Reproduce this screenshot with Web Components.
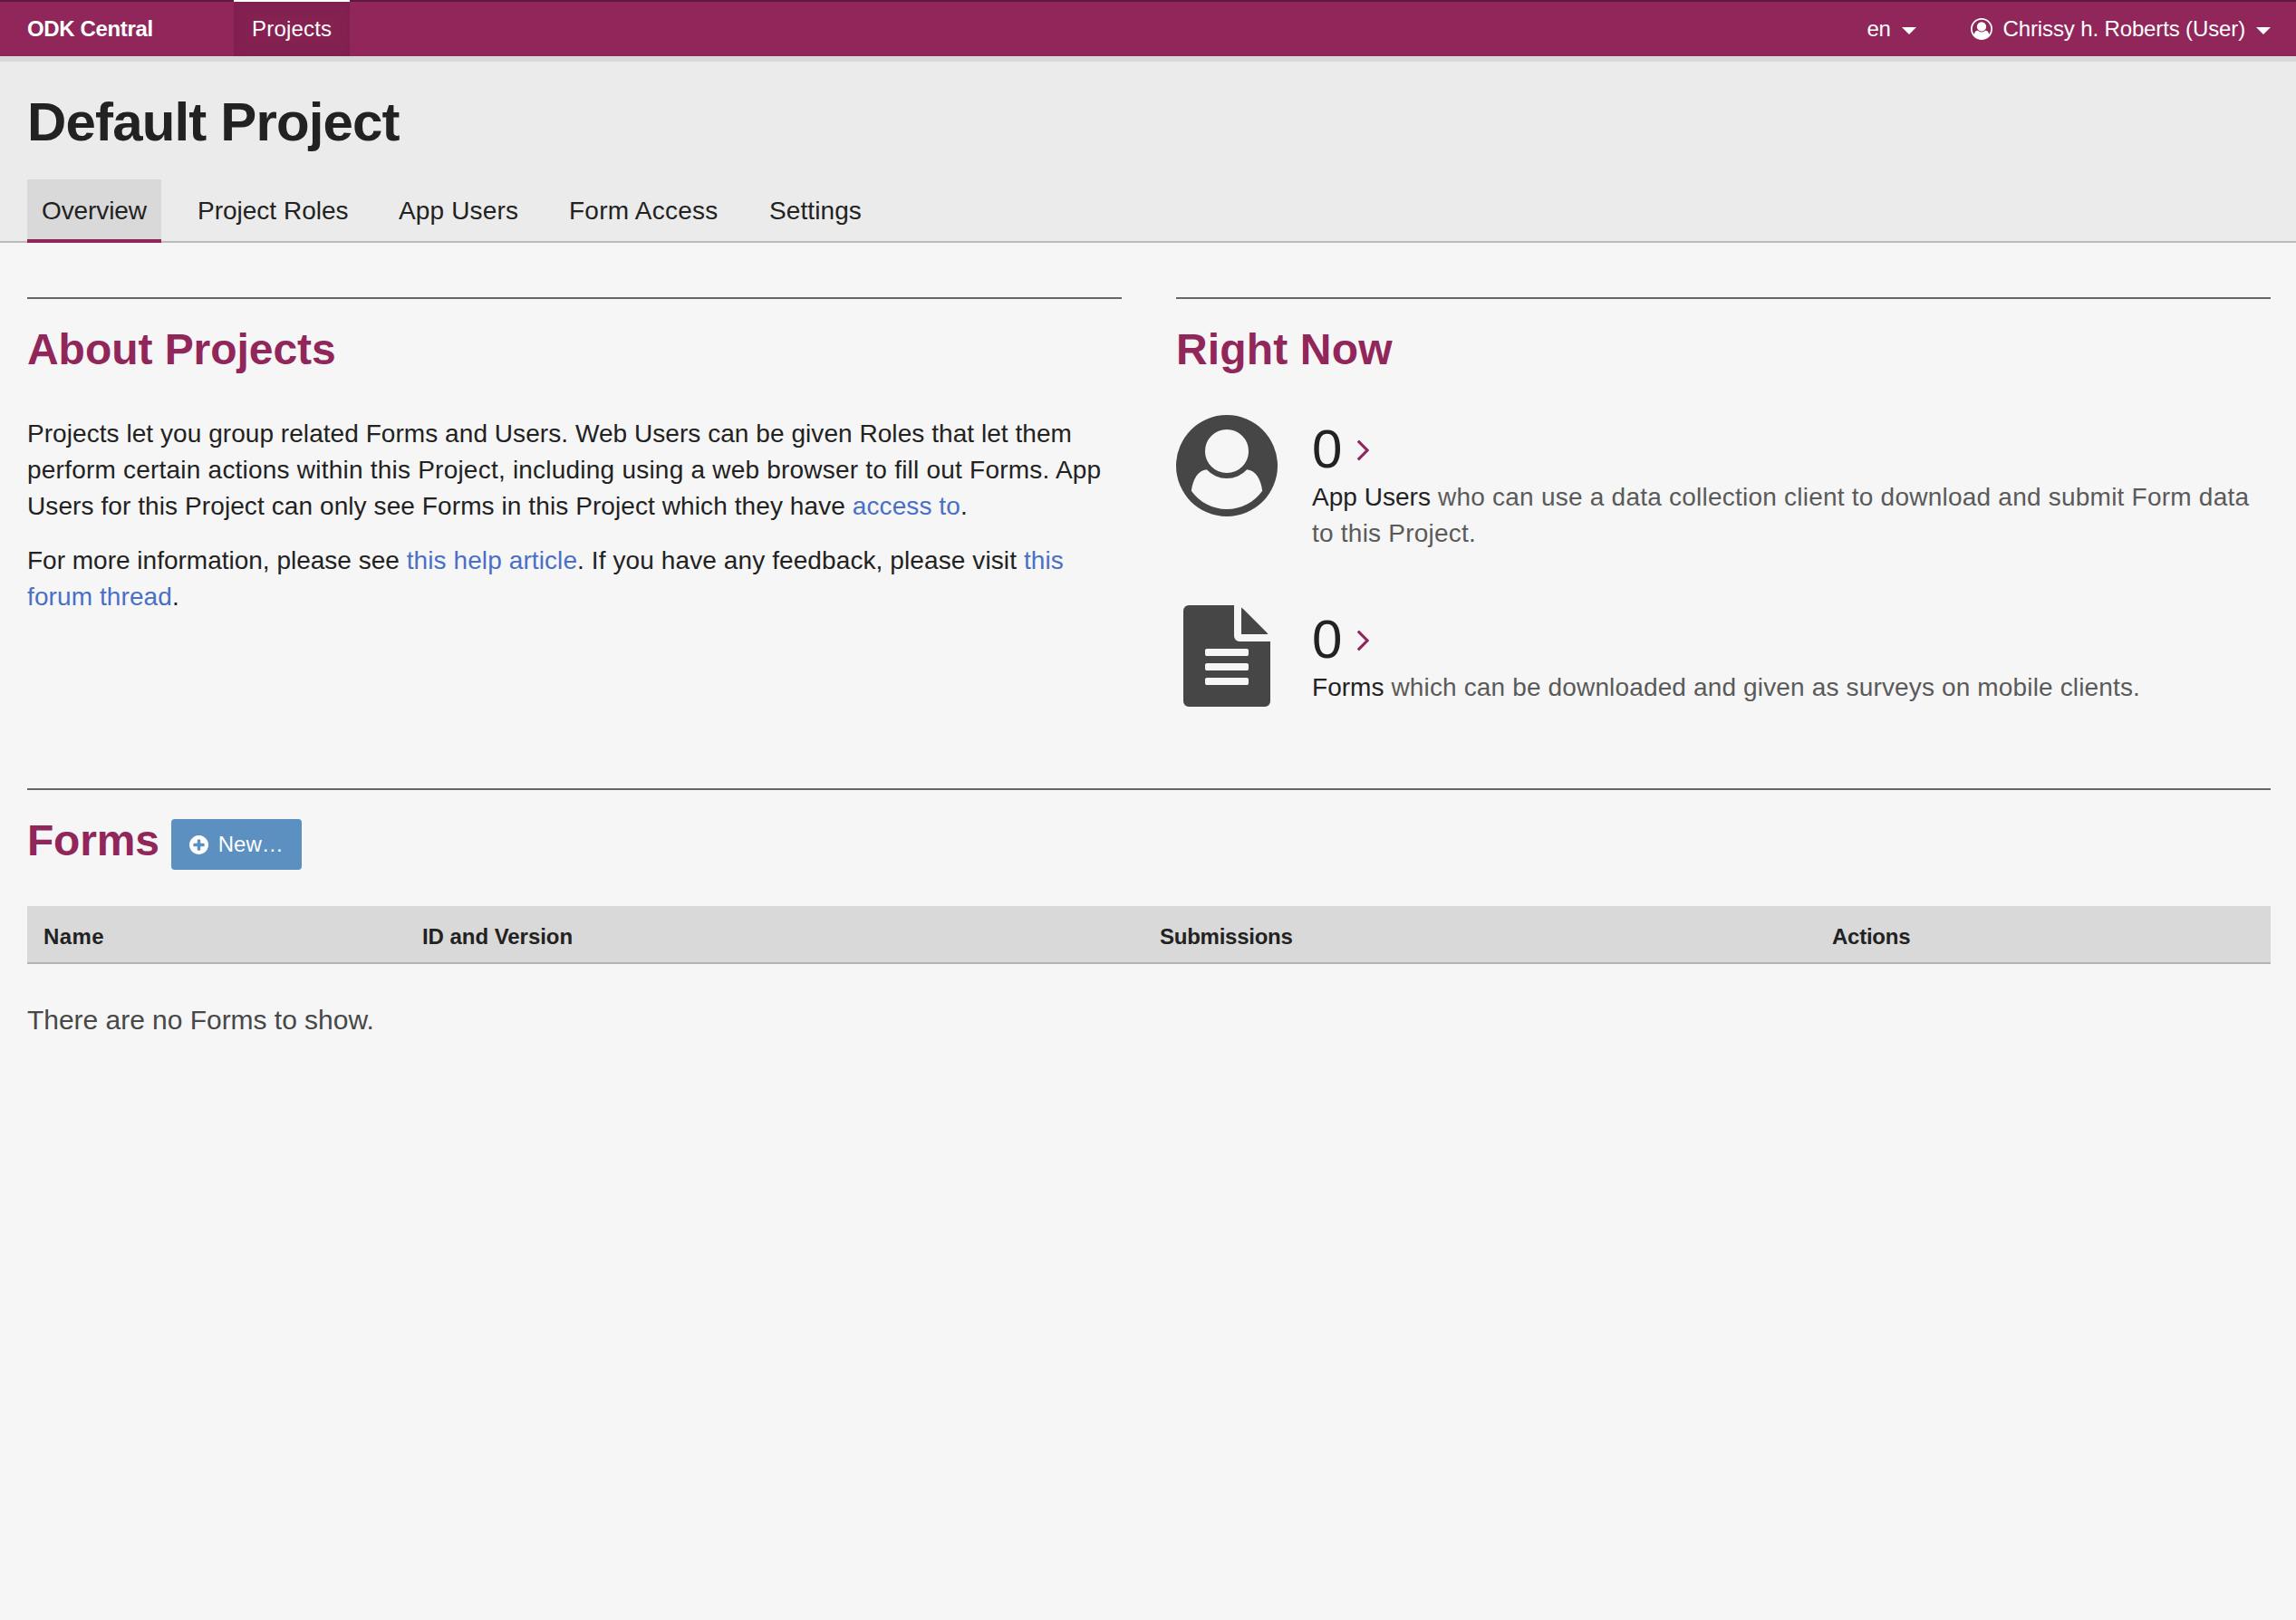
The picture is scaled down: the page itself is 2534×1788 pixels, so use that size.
<!DOCTYPE html>
<html lang="en">
<head>
<meta charset="utf-8">
<title>ODK Central</title>
<style>
  html, body { margin: 0; height: 100%; }
  body {
    background: #f6f6f6;
    color: #222;
    font-family: "Liberation Sans", Arial, sans-serif;
    font-size: 28px;
    line-height: 40px;
  }
</style>
</head>
<body>
<central-app></central-app>
<script>
const define = (name, html) => {
  const template = document.createElement('template');
  template.innerHTML = html;
  customElements.define(name, class extends HTMLElement {
    constructor() {
      super();
      this.attachShadow({ mode: 'open' }).append(template.content.cloneNode(true));
    }
  });
};

const ICONS = {
  'user-circle': ['0 0 1792 1792', 'M1523 1339q-22-155-87.5-257.5t-184.5-118.5q-67 74-159.5 115.5t-195.5 41.5-195.5-41.5-159.5-115.5q-119 16-184.5 118.5t-87.5 257.5q106 150 271 237.5t356 87.5 356-87.5 271-237.5zm-243-699q0-159-112.5-271.5t-271.5-112.5-271.5 112.5-112.5 271.5 112.5 271.5 271.5 112.5 271.5-112.5 112.5-271.5zm512 256q0 182-71 347.5t-190.5 286-285.5 191.5-349 71q-182 0-348-71t-286-191-191-286-71-348 71-348 191-286 286-191 348-71 348 71 286 191 191 286 71 348z'],
  'user-circle-o': ['0 0 1792 1792', 'M896 0q182 0 348 71t286 191 191 286 71 348q0 181-70.5 347t-190.5 286-286 191.5-349 71.5-349-71-285.5-191.5-190.5-286-71-347.5 71-348 191-286 286-191 348-71zm619 1351q149-205 149-455 0-156-61-298t-164-245-245-164-298-61-298 61-245 164-164 245-61 298q0 250 149 455 66-327 306-327 131 128 313 128t313-128q240 0 306 327zm-235-647q0-159-112.5-271.5t-271.5-112.5-271.5 112.5-112.5 271.5 112.5 271.5 271.5 112.5 271.5-112.5 112.5-271.5z'],
  'file-text': ['0 0 1792 1792', 'M1596 476q14 14 28 36h-472v-472q22 14 36 28zm-476 164h544v1056q0 40-28 68t-68 28h-1344q-40 0-68-28t-28-68v-1600q0-40 28-68t68-28h800v544q0 40 28 68t68 28zm160 736v-64q0-14-9-23t-23-9h-704q-14 0-23 9t-9 23v64q0 14 9 23t23 9h704q14 0 23-9t9-23zm0-256v-64q0-14-9-23t-23-9h-704q-14 0-23 9t-9 23v64q0 14 9 23t23 9h704q14 0 23-9t9-23zm0-256v-64q0-14-9-23t-23-9h-704q-14 0-23 9t-9 23v64q0 14 9 23t23 9h704q14 0 23-9t9-23z'],
  'plus-circle': ['128 128 1536 1536', 'M1344 960v-128q0-26-19-45t-45-19h-256v-256q0-26-19-45t-45-19h-128q-26 0-45 19t-19 45v256h-256q-26 0-45 19t-19 45v128q0 26 19 45t45 19h256v256q0 26 19 45t45 19h128q26 0 45-19t19-45v-256h256q26 0 45-19t19-45zm320-64q0 209-103 385.5t-279.5 279.5-385.5 103-385.5-103-279.5-279.5-103-385.5 103-385.5 279.5-279.5 385.5-103 385.5 103 279.5 279.5 103 385.5z'],
  'angle-right': ['589 470 582 980', 'M1171 960q0 13-10 23l-466 466q-10 10-23 10t-23-10l-50-50q-10-10-10-23t10-23l393-393-393-393q-10-10-10-23t10-23l50-50q10-10 23-10t23 10l466 466q10 10 10 23z']
};

customElements.define('c-icon', class extends HTMLElement {
  connectedCallback() {
    if (this.shadowRoot) return;
    const [box, path] = ICONS[this.getAttribute('name')];
    this.attachShadow({ mode: 'open' }).innerHTML =
      `<style>:host{display:block;flex:none} svg{display:block;width:100%;height:100%;overflow:visible}</style>
       <svg viewBox="${box}" fill="currentColor" aria-hidden="true"><path d="${path}"/></svg>`;
  }
});

define('c-caret', `<style>
  :host { display: block; flex: none; border: 8px solid transparent; border-top-color: #fff; border-bottom: 0; margin-top: 4px; }
</style>`);

define('nav-bar', `<style>
  :host {
    display: flex; align-items: stretch; box-sizing: border-box; height: 62px;
    padding: 0 28px 0 30px; background: #91265a; border-top: 2px solid #62173c;
    box-shadow: 0 6px 0 #d9d9d9; color: #fff; font-size: 24px; line-height: 60px; white-space: nowrap;
    position: relative;
  }
  .brand { width: 228px; font-weight: bold; letter-spacing: -.36px; }
  .link { box-sizing: border-box; width: 128px; margin-top: -2px; border-top: 2px solid #fff;
    padding-left: 20px; background: #852252; box-shadow: inset 0 0 16px rgba(110,20,65,.3); letter-spacing: .2px; }
  .right { margin-left: auto; display: flex; align-items: center; }
  .lang { margin-right: 12px; letter-spacing: -.3px; }
  .user { margin: 0 12px 0 12px; letter-spacing: -.13px; }
  c-icon { width: 24px; height: 24px; margin-left: 60px; }
</style>
<span class="brand">ODK Central</span>
<span class="link">Projects</span>
<div class="right">
  <span class="lang">en</span><c-caret></c-caret>
  <c-icon name="user-circle-o"></c-icon><span class="user">Chrissy h. Roberts (User)</span><c-caret></c-caret>
</div>`);

define('page-tab', `<style>
  :host { display: block; box-sizing: border-box; height: 70px; padding: 0 16px; line-height: 69px; white-space: nowrap; }
  :host([active]) { background: #d9d9d9; border-bottom: 4px solid #91265a; }
</style><slot></slot>`);

define('page-head', `<style>
  :host { display: block; box-sizing: border-box; height: 206px; padding: 34px 30px 0; background: #ebebeb; border-bottom: 2px solid #bbb; }
  h1 { margin: 0; height: 102px; font-size: 60px; line-height: 78px; letter-spacing: -.85px; white-space: nowrap; }
  nav { display: flex; gap: 24px; }
</style>
<h1><slot name="title"></slot></h1><nav><slot></slot></nav>`);

define('page-section', `<style>
  :host { display: block; flex: 1; border-top: 2px solid #666; }
  .head { display: flex; align-items: flex-start; height: 96px; padding-top: 32px; }
  h2 { margin: 0; color: #91265a; font-size: 48px; line-height: 47px; white-space: nowrap; }
</style>
<div class="head"><h2><slot name="title"></slot></h2><slot name="action"></slot></div><slot></slot>`);

define('new-button', `<style>
  :host { display: flex; align-items: center; box-sizing: border-box; width: 144px; height: 56px; padding-left: 20px;
    background: #5b90c1; color: #fff; border-radius: 4px; font-size: 24px; line-height: 56px; }
  c-icon { width: 21px; height: 21px; margin-right: 11px; }
</style><c-icon name="plus-circle"></c-icon><span><slot></slot></span>`);

define('about-text', `<style>
  :host { display: block; padding-top: 1px; white-space: nowrap; }
  p { margin: 0 0 20px; }
  a { color: #4a6fc7; }
  .a1 { letter-spacing: .055px; }
  .a2 { letter-spacing: .22px; }
  .a3 { letter-spacing: .09px; }
  .a4 { letter-spacing: .1px; }
  .a5 { letter-spacing: .1px; }
</style>
<p><span class="a1">Projects let you group related Forms and Users. Web Users can be given Roles that let them</span><br>
<span class="a2">perform certain actions within this Project, including using a web browser to fill out Forms. App</span><br>
<span class="a3">Users for this Project can only see Forms in this Project which they have <a>access to</a>.</span></p>
<p>For more information, please see <span class="a4"><a>this help article</a>. If you have any feedback, please visit <a>this</a></span><br>
<span class="a5"><a>forum thread</a>.</span></p>`);

customElements.define('summary-item', class extends HTMLElement {
  connectedCallback() {
    if (this.shadowRoot) return;
    this.attachShadow({ mode: 'open' }).innerHTML = `<style>
      :host { display: flex; height: 210px; color: #5a5a5a; white-space: nowrap; }
      .pic { width: 112px; height: 112px; margin-right: 38px; color: #464646; }
      .count { display: flex; align-items: center; box-sizing: border-box; height: 71px; padding-top: 4px;
        color: #222; font-size: 60px; line-height: 70px; letter-spacing: 0; }
      .arrow { width: 13px; height: 22px; margin: 2px 0 0 17px; color: #91265a; }
      ::slotted(strong) { font-weight: normal; color: #222; letter-spacing: .03px; }
    </style>
    <c-icon class="pic" name="${this.getAttribute('icon')}"></c-icon>
    <div><div class="count"><span>${this.getAttribute('count')}</span><c-icon class="arrow" name="angle-right"></c-icon></div>
    <div><slot></slot></div></div>`;
  }
});

define('forms-table', `<style>
  :host { display: block; }
  .row { display: grid; grid-template-columns: 418px 814px 742px 1fr; box-sizing: border-box; height: 64px; padding-left: 18px;
    background: #d9d9d9; border-bottom: 2px solid #b3b3b3; font-size: 24px; font-weight: bold; line-height: 68px; white-space: nowrap; }
  .name { letter-spacing: .4px; }
  .id { letter-spacing: -.05px; }
  .subs, .acts { letter-spacing: -.25px; }
  p { margin: 41px 0 0; color: #484848; font-size: 30px; line-height: 42px; letter-spacing: -.03px; }
</style>
<div class="row"><span class="name">Name</span><span class="id">ID and Version</span><span class="subs">Submissions</span><span class="acts">Actions</span></div>
<p>There are no Forms to show.</p>`);

define('central-app', `<style>
  :host { display: block; }
  main { padding: 60px 28px 0 30px; }
  .cols { display: flex; gap: 60px; height: 542px; }
  new-button { margin-left: 13px; }
  .forms { display: block; }
  .t1 { width: 148px; letter-spacing: -.1px; }
  .t2 { width: 198px; }
  .t3 { width: 164px; letter-spacing: .15px; }
  .t4 { width: 197px; letter-spacing: .25px; }
  .t5 { letter-spacing: .1px; }
  .h-about { letter-spacing: -.05px; }
  .h-now { letter-spacing: .15px; }
  .h-forms { letter-spacing: -.2px; }
  .s1 { letter-spacing: .23px; }
  .s2 { letter-spacing: .15px; }
</style>
<nav-bar></nav-bar>
<page-head><span slot="title">Default Project</span>
  <page-tab class="t1" active>Overview</page-tab><page-tab class="t2">Project Roles</page-tab><page-tab class="t3">App Users</page-tab><page-tab class="t4">Form Access</page-tab><page-tab class="t5">Settings</page-tab>
</page-head>
<main>
  <div class="cols">
    <page-section><span slot="title" class="h-about">About Projects</span><about-text></about-text></page-section>
    <page-section><span slot="title" class="h-now">Right Now</span>
      <summary-item class="s1" icon="user-circle" count="0"><strong>App Users</strong> who can use a data collection client to download and submit Form data<br>to this Project.</summary-item>
      <summary-item class="s2" icon="file-text" count="0"><strong>Forms</strong> which can be downloaded and given as surveys on mobile clients.</summary-item>
    </page-section>
  </div>
  <page-section class="forms"><span slot="title" class="h-forms">Forms</span><new-button slot="action">New…</new-button><forms-table></forms-table></page-section>
</main>`);
</script>
</body>
</html>
